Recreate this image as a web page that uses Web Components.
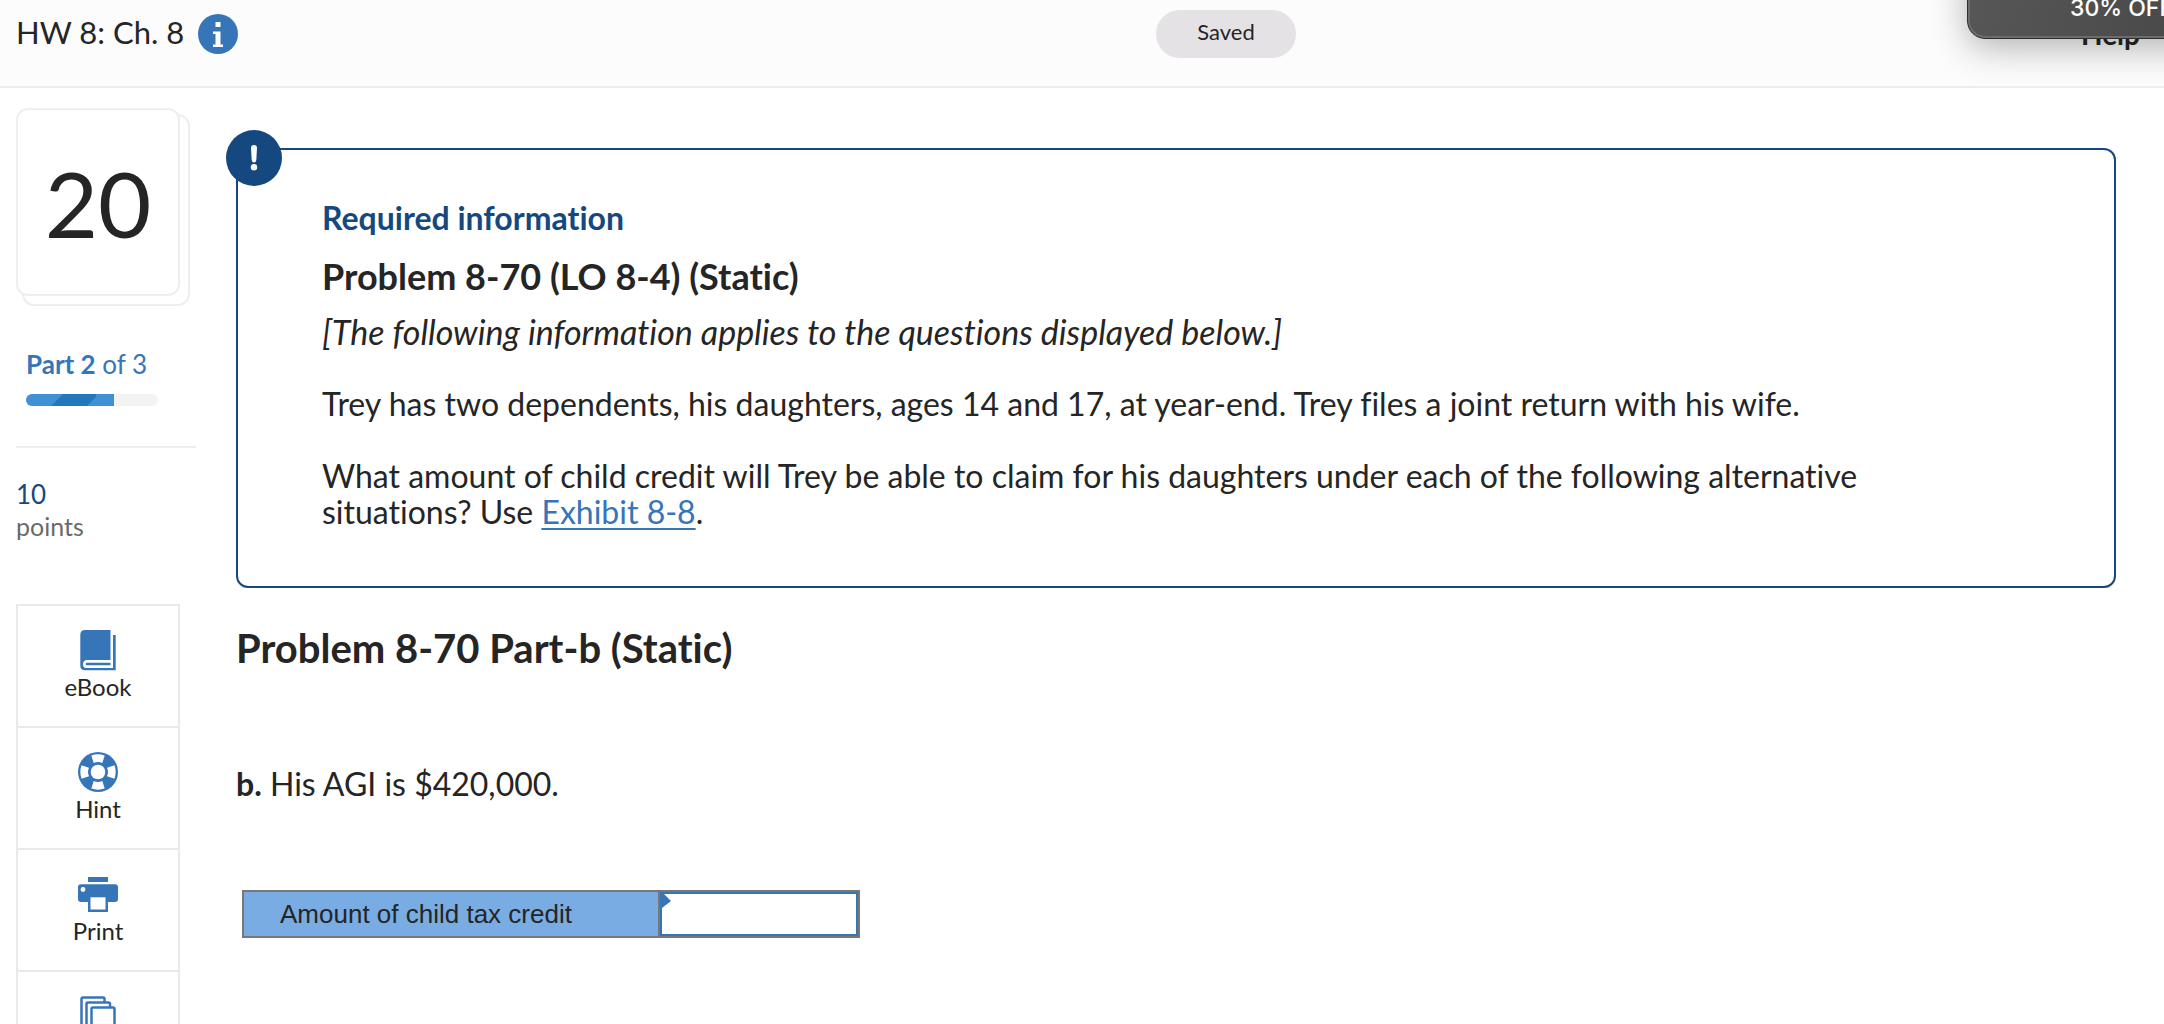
<!DOCTYPE html>
<html lang="en">
<head>
<meta charset="utf-8">
<title>HW 8: Ch. 8</title>
<style>
html, body { margin: 0; height: 100%; overflow: hidden; background: #fff; }
body { font-family: Lato, "Open Sans", sans-serif; font-variant-ligatures: none; color: #252525; --blue: #3775b9; --navy: #14487f; --line: #eee; }
</style>
</head>
<body>
<hw-app></hw-app>

<template id="t-app">
<style>
:host { display: flex; flex-direction: column; height: 100vh; overflow: hidden; position: relative; }
.body { display: flex; flex: 1; min-height: 0; }
main { flex: 1; min-width: 0; padding: 60px 48px 0 0; }
h2 { margin: 36px 0 0; font-size: 40px; line-height: 48px; }
p { margin: 0; font-size: 32px; line-height: 36px; }
.part { margin: 94px 0 88px; }
.q { margin-top: 36px; }
h3 { margin: 0 0 16px; font-size: 36px; line-height: 44px; }
.note { margin-bottom: 36px; font-size: 34px; font-style: italic; }
a { color: var(--blue); text-decoration-thickness: 2px; text-underline-offset: 4px; text-decoration-skip-ink: none; }
</style>
<hw-header></hw-header>
<div class="body">
  <hw-sidebar></hw-sidebar>
  <main>
    <info-box>
      <span slot="title">Required information</span>
      <h3>Problem 8-70 (LO 8-4) (Static)</h3>
      <p class="note">[The following information applies to the questions displayed below.]</p>
      <p>Trey has two dependents, his daughters, ages 14 and 17, at year-end. Trey files a joint return with his wife.</p>
      <p class="q">What amount of child credit will Trey be able to claim for his daughters under each of the following alternative situations? Use <a href="#exhibit">Exhibit 8-8</a>.</p>
    </info-box>
    <h2>Problem 8-70 Part-b (Static)</h2>
    <p class="part"><b>b.</b> His AGI is $420,000.</p>
    <answer-table>Amount of child tax credit</answer-table>
  </main>
</div>
<promo-toast>30% OFF</promo-toast>
</template>

<template id="t-header">
<style>
:host { display: block; background: #fcfcfc; border-bottom: 2px solid var(--line); }
header { display: grid; grid-template-columns: 1156fr auto 868fr; align-items: start; height: 86px; }
.title { display: flex; gap: 14px; padding: 14px 0 0 16px; }
h1 { margin: 0; font-size: 31px; line-height: 36px; font-weight: 400; }
button { border: 0; padding: 0; background: none; font: inherit; color: inherit; cursor: pointer; }
.title button, svg { display: block; width: 40px; height: 40px; }
.saved { margin-top: 10px; box-sizing: border-box; width: 140px; height: 48px; padding-bottom: 4px; border-radius: 24px; background: #e4e2e5; font-size: 22px; line-height: 44px; text-align: center; }
.help { justify-self: end; margin: 16px 24px 0 0; font-size: 28px; line-height: 36px; font-weight: 700; }
</style>
<header>
  <div class="title"><h1>HW 8: Ch. 8</h1>
    <button aria-label="Assignment information"><svg viewBox="0 0 40 40"><circle cx="20" cy="20" r="20" fill="#3775b9"/><path fill="#fff" d="M17.500 8h5v5h-5zM15 17.500h7.500v13H25V33H15v-2.500h2.500V20H15z"/></svg></button>
  </div>
  <div class="saved" role="status">Saved</div>
  <button class="help">Help</button>
</header>
</template>

<template id="t-sidebar">
<style>
:host { display: flex; flex-direction: column; align-items: flex-start; flex: none; box-sizing: border-box; width: 236px; padding: 20px 40px 0 16px; }
div, hr, nav { flex: none; }
.card { position: relative; width: 164px; height: 188px; }
.card span, .card::before { box-sizing: border-box; border: 2px solid var(--line); border-radius: 12px; background: #fff; }
.card::before { content: ""; position: absolute; inset: 6px -10px -10px 6px; }
.card span { position: relative; display: flex; height: 100%; align-items: center; justify-content: center; font-size: 92px; }
.part { margin: 52px 0 14px 10px; font-size: 26px; line-height: 32px; color: var(--blue); }
.bar { width: 132px; height: 12px; margin-left: 10px; border-radius: 6px; overflow: hidden; background: #f3f3f3; }
.bar svg { display: block; width: 88px; height: 12px; }
hr { align-self: stretch; margin: 40px 0 30px; border: 0; height: 2px; background: var(--line); }
.num { font-size: 26px; line-height: 32px; color: var(--navy); }
.pts { font-size: 25px; line-height: 32px; color: #6a6a6a; }
nav { box-sizing: border-box; width: 164px; margin-top: 62px; border: solid #e9e9e9; border-width: 0 2px; }
</style>
<div class="card"><span>20</span></div>
<div class="part"><b>Part 2</b> of 3</div>
<div class="bar" role="progressbar" aria-label="Parts" aria-valuenow="2" aria-valuemax="3"><svg viewBox="0 0 88 12"><path fill="#3f90d6" d="M0 0h88v12H0z"/><path fill="#2277bd" d="M37 0h33v3l-9 9H25z"/></svg></div>
<hr>
<div class="num">10</div>
<div class="pts">points</div>
<nav>
  <tool-button>
    <svg slot="icon" viewBox="0 0 40 40" fill="#3775b9"><path d="M32.500 0H7Q2.300 0 2.300 4.700V35.500Q2.300 40.300 7 40.300H37.700V5H35V38H8.500Q5 38 5 34.500Q5 30 9 30H32.500z"/><path d="M32.500 32.700H9q-1.300 0-1.300 1.200T9 35.200h23.500z"/></svg>eBook</tool-button>
  <tool-button>
    <svg slot="icon" viewBox="0 0 40 40"><circle cx="20" cy="20" r="20" fill="#3775b9"/><circle cx="20" cy="20" r="7.300" fill="#fff"/><g fill="#fff"><path d="M13.300 3.500Q20 1.200 26.700 3.500L24.300 11Q20 9 15.700 11z"/><path d="M36.500 13.300Q38.800 20 36.500 26.700L29 24.300Q31 20 29 15.700z"/><path d="M26.700 36.500Q20 38.800 13.300 36.500L15.700 29Q20 31 24.300 29z"/><path d="M3.500 26.700Q1.200 20 3.500 13.300L11 15.700Q9 20 11 24.300z"/></g></svg>Hint</tool-button>
  <tool-button>
    <svg slot="icon" viewBox="0 0 40 40"><g fill="#3775b9"><path d="M10 3h20v5H10zM10 22h20v16H10z"/><rect y="10.300" width="40" height="17.700" rx="3"/></g><circle cx="5" cy="15.500" r="2.400" fill="#fff"/><path fill="#fff" d="M12.500 23.300h15v12.200h-15z"/></svg>Print</tool-button>
  <tool-button label="References">
    <svg slot="icon" viewBox="0 0 40 40" fill="#fff" stroke="#3775b9" stroke-width="2.500"><rect x="3.500" y="1.500" width="23" height="29" rx="1.500"/><rect x="8.500" y="6.500" width="23.500" height="29" rx="1.500"/><rect x="13.500" y="11.500" width="23" height="29" rx="1.500"/></svg></tool-button>
</nav>
</template>

<template id="t-tool">
<style>
:host { display: block; }
button { display: flex; flex-direction: column; align-items: center; gap: 3px; box-sizing: border-box; width: 100%; height: 122px; padding: 24px 0 0; border: 0; border-top: 2px solid #e9e9e9; background: #fff; font: inherit; font-size: 24px; line-height: 28px; color: inherit; cursor: pointer; }
::slotted(svg) { display: block; width: 40px; height: 40px; overflow: visible; }
</style>
<button><slot name="icon"></slot><span><slot></slot></span></button>
</template>

<template id="t-info">
<style>
:host { display: block; position: relative; padding: 48px 160px 56px 84px; border: 2px solid var(--navy); border-radius: 12px; }
.badge { position: absolute; left: -12px; top: -20px; width: 56px; height: 56px; }
h2 { margin: 0 0 16px; font-size: 32px; line-height: 40px; color: var(--navy); }
</style>
<svg class="badge" viewBox="0 0 56 56" role="img" aria-label="Important"><circle cx="28" cy="28" r="28" fill="#14487f"/><path fill="#fff" d="M25 18Q25 15 28 15T31 18L30.300 30Q30 32.500 28 32.500T25.700 30z"/><circle cx="28" cy="37.300" r="3.200" fill="#fff"/></svg>
<h2><slot name="title"></slot></h2>
<slot></slot>
</template>

<template id="t-answer">
<style>
:host { display: block; margin-left: 6px; font-family: "Liberation Sans", Arial, sans-serif; }
table { border: 2px solid #777; border-spacing: 0; }
th, td { padding: 0; height: 44px; }
th { box-sizing: border-box; width: 416px; padding-left: 36px; border-right: 2px solid #777; background: #78ace2; font-size: 26px; font-weight: 400; text-align: left; }
td { position: relative; }
input { display: block; box-sizing: border-box; width: 198px; height: 44px; padding: 0 12px; border: 2px solid var(--blue); border-radius: 0; outline: 0; background: #fff; font: inherit; font-size: 26px; }
svg { position: absolute; left: 0; top: 0; width: 11px; height: 16px; }
</style>
<table><tr><th scope="row"><label for="credit"><slot></slot></label></th><td><input id="credit" type="text"><svg viewBox="0 0 11 16"><path fill="#3775b9" d="M0 0h2l9 9-9 7H0z"/></svg></td></tr></table>
</template>

<template id="t-toast">
<style>
:host { position: absolute; right: -160px; top: -60px; box-sizing: border-box; display: flex; align-items: flex-end; width: 357px; height: 99px; padding: 0 0 16px 25px; border: 1px solid #2e2e2e; border-radius: 18px; background: linear-gradient(110deg, #585858, #4a4a4a 60%, #404040); box-shadow: inset 0 0 0 2px #6c6c6c, 0 8px 36px rgba(0, 0, 0, .3); font: 500 23px/28px Inter, sans-serif; color: #fff; white-space: nowrap; }
.app { width: 52px; height: 52px; margin: 0 25px 22px 0; border-radius: 12px; background: #444; }
</style>
<div class="app"></div><span><slot></slot></span>
</template>

<script>
const define = (name, id, setup) => customElements.define(name, class extends HTMLElement {
  connectedCallback() {
    if (this.shadowRoot) return;
    this.attachShadow({ mode: 'open' }).append(document.getElementById(id).content.cloneNode(true));
    if (setup) setup(this);
  }
});
define('tool-button', 't-tool', el => {
  const label = el.getAttribute('label');
  if (label) el.shadowRoot.querySelector('button').setAttribute('aria-label', label);
});
define('info-box', 't-info');
define('answer-table', 't-answer');
define('promo-toast', 't-toast');
define('hw-header', 't-header');
define('hw-sidebar', 't-sidebar');
define('hw-app', 't-app');
</script>
</body>
</html>
